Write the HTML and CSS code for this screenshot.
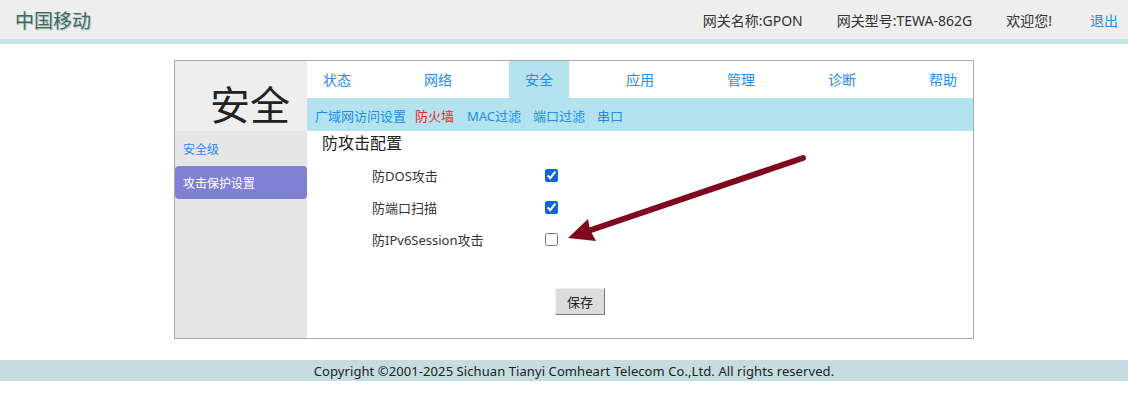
FILE: index.html
```html
<!DOCTYPE html>
<html>
<head>
  <title>安全 - 攻击保护设置</title>
  <link rel="stylesheet" href="styles.css">
</head>
<body>
  <div class="topbar">
    <div class="logo">中国移动</div>
    <div class="top-info">
      <span>网关名称:GPON</span>
      <span>网关型号:TEWA-862G</span>
      <span>欢迎您!</span>
      <a href="#" class="logout">退出</a>
    </div>
  </div>

  <div class="main">
    <div class="side">
      <div class="side-title">安全</div>
      <div class="side-menu">
        <a href="#" class="side-item">安全级</a>
        <a href="#" class="side-item active">攻击保护设置</a>
      </div>
    </div>
    <div class="page">
      <div class="nav">
        <a href="#" class="tab">状态</a>
        <a href="#" class="tab">网络</a>
        <a href="#" class="tab current">安全</a>
        <a href="#" class="tab">应用</a>
        <a href="#" class="tab">管理</a>
        <a href="#" class="tab">诊断</a>
        <a href="#" class="tab">帮助</a>
      </div>
      <div class="subnav">
        <a href="#" class="sub w1">广域网访问设置</a>
        <a href="#" class="sub w2 on">防火墙</a>
        <a href="#" class="sub w3">MAC过滤</a>
        <a href="#" class="sub w4">端口过滤</a>
        <a href="#" class="sub">串口</a>
      </div>
      <div class="content">
        <div class="section-title">防攻击配置</div>
        <div class="options">
          <div class="row">
            <label for="dos">防DOS攻击</label>
            <input type="checkbox" id="dos" checked>
          </div>
          <div class="row">
            <label for="scan">防端口扫描</label>
            <input type="checkbox" id="scan" checked>
          </div>
          <div class="row">
            <label for="v6">防IPv6Session攻击</label>
            <input type="checkbox" id="v6">
          </div>
        </div>
        <div class="actions">
          <button type="button">保存</button>
        </div>
      </div>
    </div>
  </div>

  <div class="footer">Copyright ©2001-2025 Sichuan Tianyi Comheart Telecom Co.,Ltd. All rights reserved.</div>

  <!-- annotation arrow -->
  <svg class="arrow" width="1128" height="395" viewBox="0 0 1128 395">
    <line x1="803" y1="158" x2="588" y2="231" stroke="#80091e" stroke-width="6" stroke-linecap="round"/>
    <polygon points="568,238 588,219 590,230 596,241" fill="#80091e"/>
  </svg>
</body>
</html>
```

FILE: styles.css
```css
body {
  margin: 0;
  font-family: "Noto Sans", "Noto Sans CJK SC", sans-serif;
  color: #333;
  background: #fff;
  position: relative;
}
a {
  text-decoration: none;
}
.topbar {
  height: 39px;
  background-color: #eeeeee;
  border-bottom: 5px solid #c4e6e6;
  display: flex;
  align-items: center;
  justify-content: space-between;
  padding: 0 10px 0 15px;
}
.logo {
  font-size: 19px;
  color: #3e6b68;
  text-shadow: 1px 1px 0 #b8c8c0;
}
.top-info {
  display: flex;
  gap: 34px;
  font-size: 14px;
  color: #333;
}
.logout {
  color: #1e8cf0;
  margin-left: 4px;
}
.main {
  width: 798px;
  height: 277px;
  margin: 16px 0 0 174px;
  border: 1px solid #aaaaaa;
  display: flex;
}
.side {
  width: 133px;
  display: flex;
  flex-direction: column;
}
.side-title {
  height: 70px;
  background-color: #eeeeee;
  font-size: 40px;
  line-height: 48px;
  padding: 20px 0 0 35px;
  box-sizing: border-box;
  color: #222;
}
.side-menu {
  flex: 1;
  background-color: #e6e6e6;
  display: flex;
  flex-direction: column;
}
.side-item {
  height: 35px;
  line-height: 38px;
  padding-left: 8px;
  font-size: 12px;
  color: #1e8cf0;
}
.side-item.active {
  height: 33px;
  line-height: 35px;
  background-color: #8080d4;
  color: #fff;
  border-radius: 4px;
}
.page {
  flex: 1;
  display: flex;
  flex-direction: column;
}
.nav {
  height: 37px;
  display: flex;
  gap: 41px;
}
.tab {
  width: 60px;
  text-align: center;
  line-height: 38px;
  font-size: 14px;
  color: #1e8cf0;
}
.tab.current {
  background-color: #b3e3ef;
}
.subnav {
  height: 33px;
  background-color: #b3e3ef;
  display: flex;
  align-items: center;
  padding-left: 8px;
  font-size: 13px;
}
.sub {
  color: #1e8cf0;
  margin-right: 12px;
  padding-top: 2px;
}
.sub.w1 { margin-right: 9px; }
.sub.w2 { margin-right: 13px; }
.sub.w3 { margin-right: 12px; }
.sub.on {
  color: #f0201e;
}
.content {
  padding: 0 0 0 15px;
}
.section-title {
  font-size: 16px;
  line-height: 24px;
  color: #222;
}
.options {
  padding-top: 4px;
}
.row {
  height: 32px;
  display: flex;
  align-items: center;
  padding-left: 50px;
  font-size: 13px;
}
.row label {
  width: 173px;
}
.row input {
  margin: 0;
  width: 13px;
  height: 13px;
  accent-color: #1563d6;
}
.actions {
  padding: 33px 0 0 233px;
}
.actions button {
  width: 50px;
  height: 27px;
  font-family: inherit;
  font-size: 13px;
  color: #222;
  background-color: #dcdcdc;
  border: 1px solid;
  border-color: #f0f0f0 #7a7a7a #7a7a7a #f0f0f0;
  padding: 0;
}
.footer {
  margin-top: 21px;
  height: 21px;
  line-height: 22px;
  background-color: #c5dce0;
  text-align: center;
  padding-left: 20px;
  font-size: 13px;
  letter-spacing: 0.08px;
  color: #222;
}
.arrow {
  position: absolute;
  left: 0;
  top: 0;
  pointer-events: none;
}
```
